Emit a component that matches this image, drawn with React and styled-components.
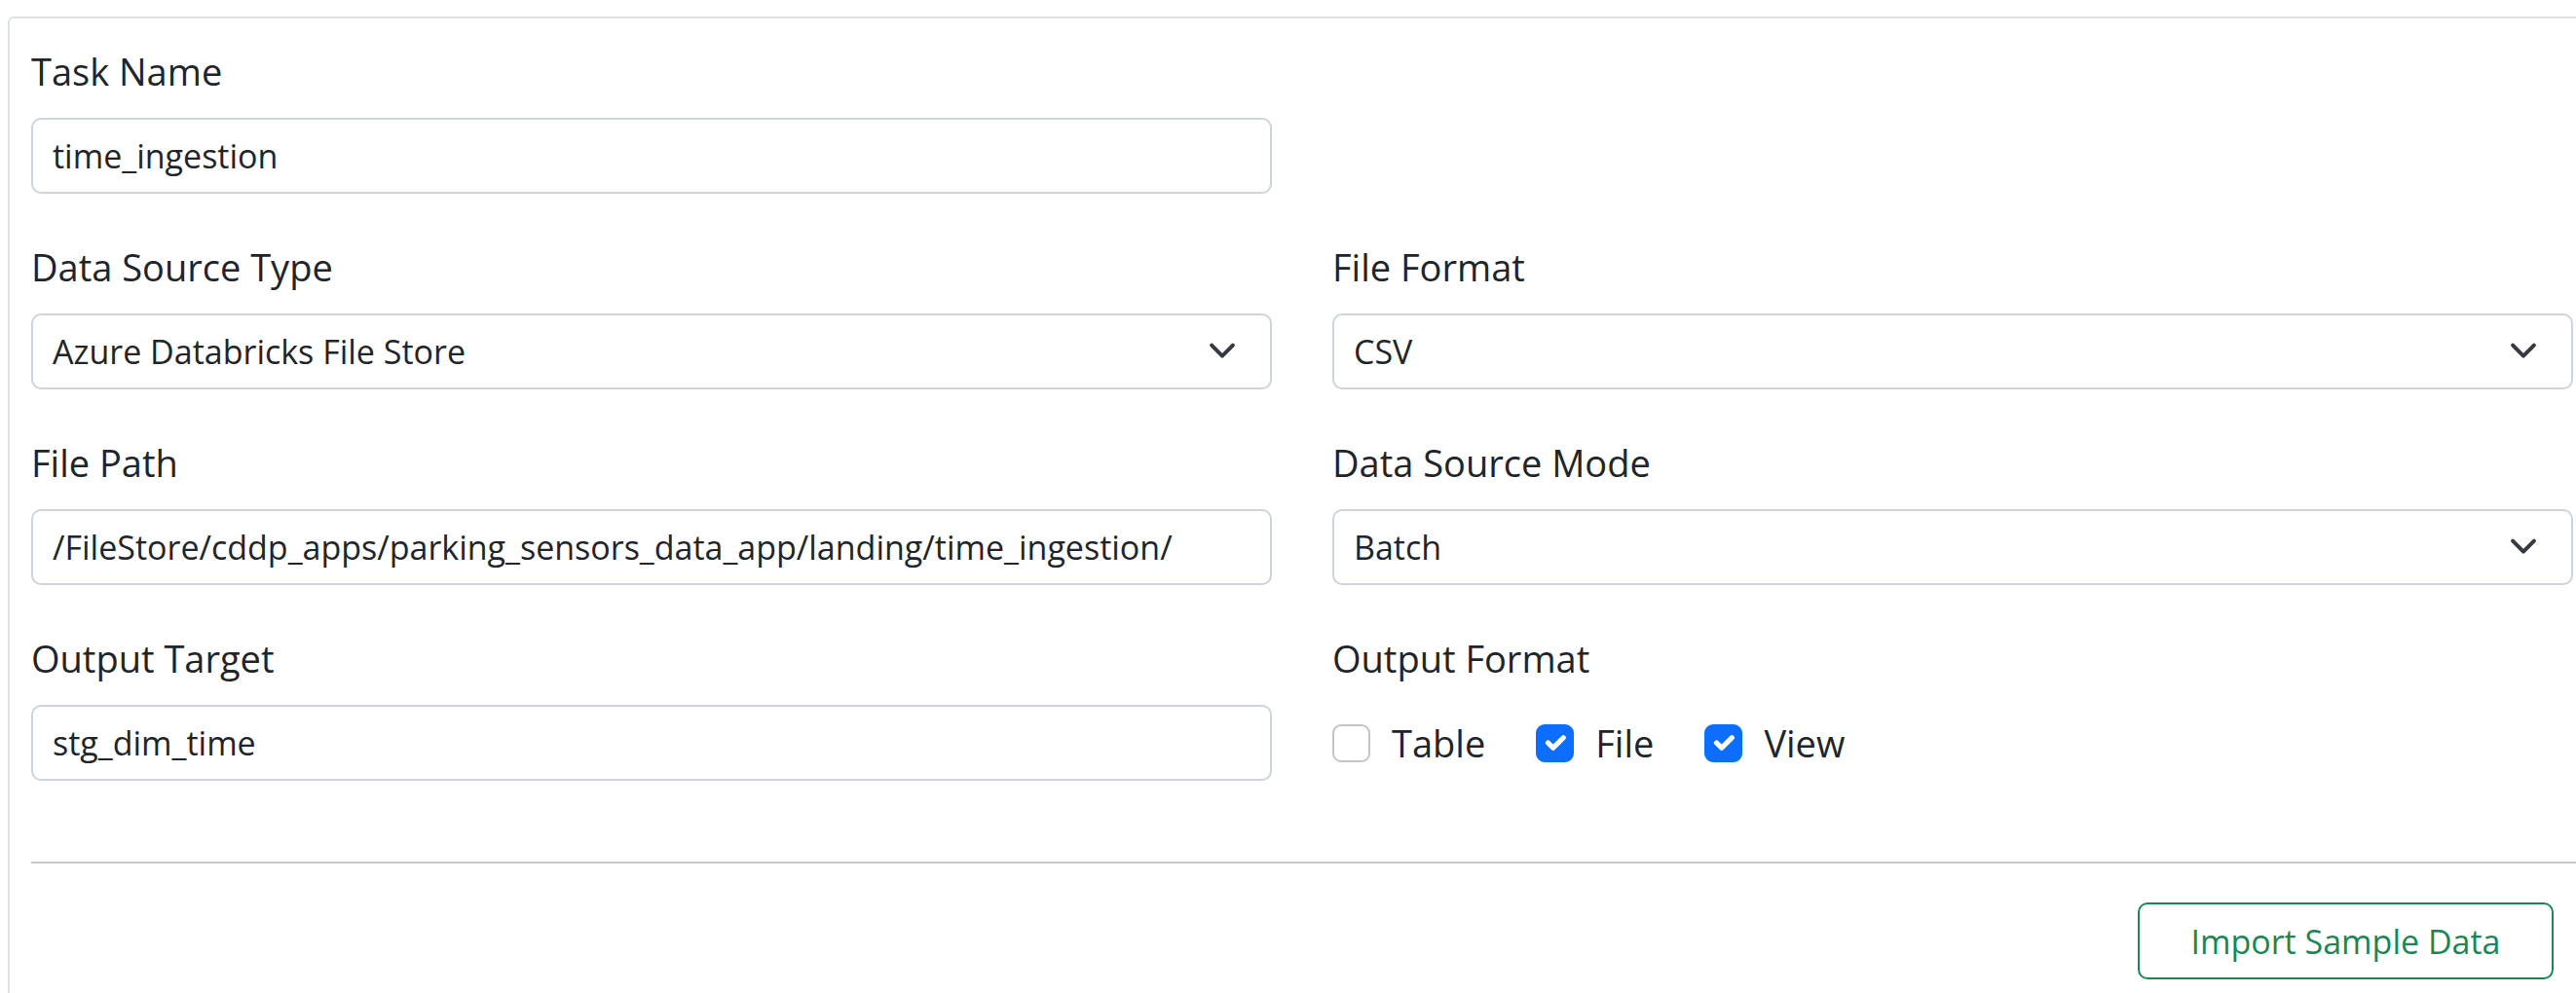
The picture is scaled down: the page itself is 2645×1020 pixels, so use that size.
import React, { useState } from "react"
import styled, { createGlobalStyle } from "styled-components"

const GlobalStyle = createGlobalStyle`
    html, body {
        margin: 0;
        padding: 0;
        background: #ffffff;
        overflow: hidden;
    }
    body {
        font-family: "Open Sans", "Noto Sans", sans-serif;
        color: #212529;
    }
`

export default function App() {
    const [formats, setFormats] = useState({ Table: false, File: true, View: true })

    function toggle(name) {
        setFormats({ ...formats, [name]: !formats[name] })
    }

    return (
        <Page>
            <GlobalStyle />
            <Card>
                <Body>
                    <Grid>
                        <Field>
                            <Label>Task Name</Label>
                            <Input defaultValue="time_ingestion" />
                        </Field>
                        <div></div>

                        <Field>
                            <Label>Data Source Type</Label>
                            <Select>
                                <span>Azure Databricks File Store</span>
                                <Chevron />
                            </Select>
                        </Field>
                        <Field>
                            <Label>File Format</Label>
                            <Select>
                                <span>CSV</span>
                                <Chevron />
                            </Select>
                        </Field>

                        <Field>
                            <Label>File Path</Label>
                            <Input defaultValue="/FileStore/cddp_apps/parking_sensors_data_app/landing/time_ingestion/" />
                        </Field>
                        <Field>
                            <Label>Data Source Mode</Label>
                            <Select>
                                <span>Batch</span>
                                <Chevron />
                            </Select>
                        </Field>

                        <Field>
                            <Label>Output Target</Label>
                            <Input defaultValue="stg_dim_time" />
                        </Field>
                        <Field>
                            <Label>Output Format</Label>
                            <Checks>
                                {Object.keys(formats).map(name => (
                                    <CheckItem key={name} onClick={() => toggle(name)}>
                                        <Box checked={formats[name]}>
                                            {formats[name] && (
                                                <svg width="36" height="36" viewBox="0 0 20 20">
                                                    <path d="m6 10 3 3 6-6" fill="none" stroke="#fff" strokeWidth="3" strokeLinecap="round" strokeLinejoin="round" />
                                                </svg>
                                            )}
                                        </Box>
                                        <span>{name}</span>
                                    </CheckItem>
                                ))}
                            </Checks>
                        </Field>
                    </Grid>
                    <Divider />
                    <Footer>
                        <OutlineButton>Import Sample Data</OutlineButton>
                    </Footer>
                </Body>
            </Card>
        </Page>
    )
}

function Chevron() {
    return (
        <svg width="30" height="20" viewBox="0 0 16 11">
            <path d="m2 2 6 6 6-6" fill="none" stroke="#343a40" strokeWidth="2.2" strokeLinecap="round" strokeLinejoin="round" />
        </svg>
    )
}

const Page = styled.div`
    width: 100%;
    padding: 17px 0 0 8px;
    box-sizing: border-box;
`

const Card = styled.div`
    box-sizing: border-box;
    width: 2700px;
    height: 1100px;
    border: 2px solid #dee2e6;
    border-radius: 6px;
    padding: 0 22px;
`

const Body = styled.div`
    width: 2610px;
`

const Grid = styled.div`
    display: grid;
    grid-template-columns: 1274px 1274px;
    column-gap: 62px;
    row-gap: 47px;
    padding-top: 26px;
`

const Field = styled.div`
    display: flex;
    flex-direction: column;
`

const Label = styled.label`
    font-size: 38px;
    line-height: 57px;
    margin-bottom: 19px;
    color: #212529;
`

const Input = styled.input`
    box-sizing: border-box;
    width: 100%;
    height: 78px;
    border: 2px solid #ced4da;
    border-radius: 10px;
    padding: 0 20px;
    font-family: "Open Sans", "Noto Sans", sans-serif;
    font-size: 34px;
    color: #212529;
    outline: none;
`

const Select = styled.div`
    box-sizing: border-box;
    width: 100%;
    height: 78px;
    border: 2px solid #ced4da;
    border-radius: 10px;
    padding: 0 34px 0 20px;
    display: flex;
    align-items: center;
    justify-content: space-between;
    font-size: 34px;
    color: #212529;
`

const Checks = styled.div`
    display: flex;
    align-items: center;
    height: 78px;
    gap: 52px;
`

const CheckItem = styled.div`
    display: flex;
    align-items: center;
    gap: 22px;
    font-size: 38px;
    cursor: pointer;
`

const Box = styled.div`
    box-sizing: border-box;
    width: 39px;
    height: 39px;
    border-radius: 9px;
    display: flex;
    align-items: center;
    justify-content: center;
    background: ${props => props.checked ? "#0d6efd" : "#ffffff"};
    border: 2px solid ${props => props.checked ? "#0d6efd" : "#c4c4c4"};
`

const Divider = styled.hr`
    border: none;
    border-top: 2px solid #c8c8c8;
    margin: 83px -40px 0 0;
`

const Footer = styled.div`
    display: flex;
    justify-content: flex-end;
    padding: 40px 20px 0 0;
`

const OutlineButton = styled.button`
    box-sizing: border-box;
    width: 427px;
    height: 79px;
    border: 2px solid #198754;
    border-radius: 10px;
    background: #ffffff;
    color: #198754;
    font-family: "Open Sans", "Noto Sans", sans-serif;
    font-size: 34px;
`
